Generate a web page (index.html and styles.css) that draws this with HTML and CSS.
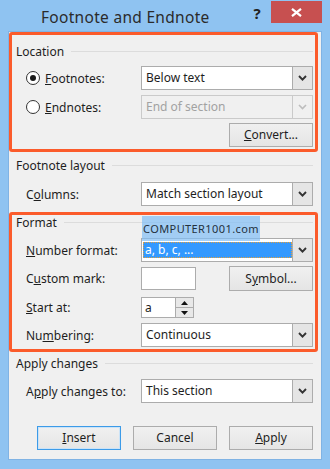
FILE: index.html
```html
<!DOCTYPE html>
<html>
<head>
<meta charset="utf-8">
<link rel="stylesheet" href="styles.css">
</head>
<body>
<div class="window">
  <div class="titlebar">
    <div class="title">Footnote and Endnote</div>
    <div class="help">?</div>
    <div class="close"><svg width="11" height="9" viewBox="0 0 11 9"><path d="M1 0.8 L10 8.2 M10 0.8 L1 8.2" stroke="#fff" stroke-width="2.2" fill="none"/></svg></div>
  </div>
  <div class="client">
    <section class="group hl g1">
      <div class="legend"><span>Location</span><i class="rule"></i></div>
      <div class="row r1">
        <div class="lbl radio-lbl"><span class="radio on"></span><span><u>F</u>ootnotes:</span></div>
        <div class="combo"><div class="val">Below text</div><div class="arrow"><svg width="9" height="6" viewBox="0 0 9 6"><path d="M1 1 L4.5 4.6 L8 1" stroke="#333" stroke-width="1.9" fill="none"/></svg></div></div>
      </div>
      <div class="row r2">
        <div class="lbl radio-lbl"><span class="radio"></span><span><u>E</u>ndnotes:</span></div>
        <div class="combo disabled"><div class="val">End of section</div><div class="arrow"><svg width="9" height="6" viewBox="0 0 9 6"><path d="M1 1 L4.5 4.6 L8 1" stroke="#bdbdbd" stroke-width="1.6" fill="none"/></svg></div></div>
      </div>
      <div class="row r3 right">
        <div class="btn"><u>C</u>onvert...</div>
      </div>
    </section>
    <section class="group g2">
      <div class="legend"><span>Footnote layout</span><i class="rule"></i></div>
      <div class="row r4">
        <div class="lbl">C<u>o</u>lumns:</div>
        <div class="combo"><div class="val">Match section layout</div><div class="arrow"><svg width="9" height="6" viewBox="0 0 9 6"><path d="M1 1 L4.5 4.6 L8 1" stroke="#333" stroke-width="1.9" fill="none"/></svg></div></div>
      </div>
    </section>
    <section class="group hl g3">
      <div class="legend"><span>Format</span><i class="rule"></i></div>
      <div class="row r5">
        <div class="lbl"><u>N</u>umber format:</div>
        <div class="combo"><div class="val sel"><span class="hi">a, b, c, ...</span></div><div class="arrow"><svg width="9" height="6" viewBox="0 0 9 6"><path d="M1 1 L4.5 4.6 L8 1" stroke="#333" stroke-width="1.9" fill="none"/></svg></div></div>
      </div>
      <div class="row r6">
        <div class="lbl">C<u>u</u>stom mark:</div>
        <div class="field"></div>
        <div class="btn sym">S<u>y</u>mbol...</div>
      </div>
      <div class="row r7">
        <div class="lbl"><u>S</u>tart at:</div>
        <div class="spin">
          <div class="spin-val">a</div>
          <div class="spin-btns">
            <div class="sb"><svg width="7" height="4" viewBox="0 0 7 4"><path d="M0 4 L3.5 0 L7 4 Z" fill="#111"/></svg></div>
            <div class="sb"><svg width="7" height="4" viewBox="0 0 7 4"><path d="M0 0 L3.5 4 L7 0 Z" fill="#111"/></svg></div>
          </div>
        </div>
      </div>
      <div class="row r8">
        <div class="lbl">Nu<u>m</u>bering:</div>
        <div class="combo"><div class="val">Continuous</div><div class="arrow"><svg width="9" height="6" viewBox="0 0 9 6"><path d="M1 1 L4.5 4.6 L8 1" stroke="#333" stroke-width="1.9" fill="none"/></svg></div></div>
      </div>
      <div class="watermark">COMPUTER1001.com</div>
    </section>
    <section class="group g4">
      <div class="legend"><span>Apply changes</span><i class="rule"></i></div>
      <div class="row r9">
        <div class="lbl">A<u>p</u>ply changes to:</div>
        <div class="combo"><div class="val">This section</div><div class="arrow"><svg width="9" height="6" viewBox="0 0 9 6"><path d="M1 1 L4.5 4.6 L8 1" stroke="#333" stroke-width="1.9" fill="none"/></svg></div></div>
      </div>
    </section>
    <div class="buttons">
      <div class="btn default"><u>I</u>nsert</div>
      <div class="btn">Cancel</div>
      <div class="btn"><u>A</u>pply</div>
    </div>
  </div>
</div>
</body>
</html>
```
FILE: styles.css
```css
* { box-sizing: border-box; }
html, body { margin: 0; padding: 0; }
body {
  width: 330px;
  height: 469px;
  overflow: hidden;
  font-family: "Noto Sans", "Open Sans", sans-serif;
  font-size: 12px;
  color: #1e1e1e;
}
u { text-decoration: underline; text-underline-offset: 1px; }

.window {
  width: 330px;
  height: 469px;
  background: #8fc3f1;
  display: flex;
  flex-direction: column;
}

.titlebar {
  height: 31px;
  display: flex;
  align-items: flex-start;
  flex: none;
}
.title {
  flex: 1;
  padding-left: 41px;
  padding-top: 7px;
  font-size: 15.5px;
  letter-spacing: 0.3px;
  line-height: 20px;
  color: #2b2b2b;
}
.help {
  width: 10px;
  margin-right: 9px;
  padding-top: 3px;
  font-size: 15px;
  line-height: 20px;
  font-weight: bold;
  color: #222;
  text-align: center;
}
.close {
  width: 51px;
  height: 22px;
  margin-top: 1px;
  margin-right: 8px;
  background: #c75050;
  display: flex;
  align-items: center;
  justify-content: center;
}

.client {
  margin: 0 8px;
  height: 429px;
  background: #f0f0f0;
  border: 1px solid #80b3e4;
  display: flex;
  flex-direction: column;
}

.group {
  position: relative;
  border: 3px solid transparent;
  border-radius: 3px;
  margin-right: 3px;
}
.group.hl { border-color: #fb5b2b; }
.g1 { padding-bottom: 2px; }
.g2 { padding-bottom: 3px; }
.g3 { padding-bottom: 2px; }

.legend {
  height: 14px;
  display: flex;
  align-items: center;
  gap: 7px;
  padding-left: 4px;
  padding-right: 2px;
  line-height: 14px;
}
.legend .rule {
  flex: 1;
  height: 1px;
  background: #dcdcdc;
  margin-top: -1px;
}
.g1 .legend { margin-top: 10px; }
.g2 .legend { margin-top: 4px; }
.g3 .legend { margin-top: 1px; }
.g4 .legend { margin-top: 2px; }

.row {
  display: flex;
  align-items: center;
  padding-left: 14px;
}
.row.right { justify-content: flex-end; padding-right: 2px; }
.r1 { margin-top: 7px; }
.r2 { margin-top: 5px; }
.r3 { margin-top: 4px; }
.r4 { margin-top: 9px; }
.r5 { margin-top: 8px; }
.r6 { margin-top: 4px; height: 25px; }
.r7 { margin-top: 6px; }
.r8 { margin-top: 5px; }
.r9 { margin-top: 8px; }

.lbl { width: 115px; flex: none; white-space: nowrap; }
.radio-lbl { display: flex; align-items: center; gap: 5px; }
.radio {
  width: 14px;
  height: 14px;
  border-radius: 50%;
  border: 1px solid #333;
  background: #fff;
  display: flex;
  align-items: center;
  justify-content: center;
}
.radio.on::after {
  content: "";
  width: 6px;
  height: 6px;
  border-radius: 50%;
  background: #1a1a1a;
}

.combo {
  width: 172px;
  height: 24px;
  flex: none;
  display: flex;
  border: 1px solid #acacac;
  background: #fff;
}
.combo .val {
  flex: 1;
  padding-left: 4px;
  line-height: 22px;
  white-space: nowrap;
}
.combo .arrow {
  width: 20px;
  border-left: 1px solid #acacac;
  background: #e5e5e5;
  display: flex;
  align-items: center;
  justify-content: center;
}
.combo.disabled { background: #f0f0f0; border-color: #cacaca; }
.combo.disabled .val { color: #a2a2a2; }
.combo.disabled .arrow { background: #f0f0f0; border-left-color: #cacaca; }

.combo .val.sel { padding: 3px 0 3px 1px; line-height: 16px; }
.hi {
  display: block;
  height: 16px;
  background: #3399ff;
  color: #fff;
  padding-left: 2px;
  outline: 1px dotted #e0a040;
  outline-offset: -1px;
}

.field {
  width: 55px;
  height: 23px;
  flex: none;
  border: 1px solid #acacac;
  background: #fff;
}

.btn {
  width: 84px;
  height: 24px;
  flex: none;
  border: 1px solid #acacac;
  background: linear-gradient(#f0f0f0, #e5e5e5);
  text-align: center;
  line-height: 22px;
  color: #1e1e1e;
}
.btn.sym { height: 25px; line-height: 23px; margin-left: 33px; }
.btn.default { border-color: #3c9be8; box-shadow: inset 0 0 0 1px #cbe3f7; }

.spin {
  width: 53px;
  height: 21px;
  flex: none;
  display: flex;
  border: 1px solid #acacac;
  background: #fff;
}
.spin-val { flex: 1; padding-left: 3px; line-height: 19px; }
.spin-btns {
  width: 18px;
  display: flex;
  flex-direction: column;
  border-left: 1px solid #acacac;
}
.sb {
  flex: 1;
  background: #e8e8e8;
  display: flex;
  align-items: center;
  justify-content: center;
}
.sb + .sb { border-top: 1px solid #acacac; }

.watermark {
  position: absolute;
  left: 130px;
  top: 1px;
  width: 118px;
  height: 25px;
  background: rgba(128, 189, 245, 0.7);
  color: #24313d;
  font-size: 11px;
  letter-spacing: 0.4px;
  line-height: 25px;
  text-align: center;
}

.buttons {
  margin-top: 20px;
  display: flex;
  justify-content: flex-end;
  gap: 12px;
  padding-right: 8px;
}
```
